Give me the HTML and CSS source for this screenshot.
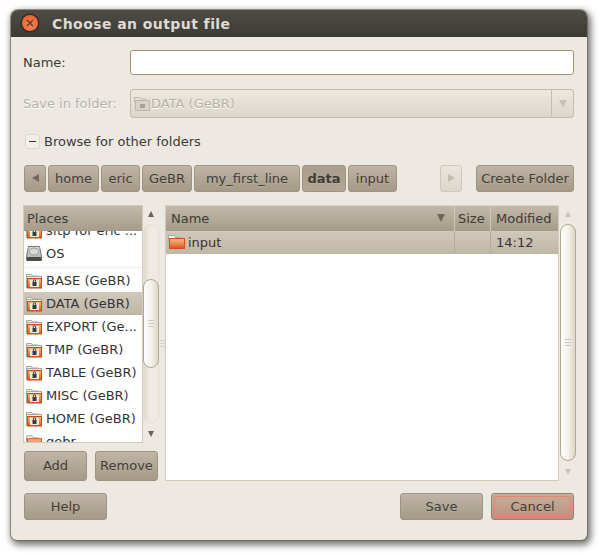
FILE: index.html
```html
<!DOCTYPE html>
<html lang="en">
<head>
<meta charset="utf-8">
<title>Choose an output file</title>
<link rel="stylesheet" href="styles.css">
</head>
<body>
<svg class="defs" width="0" height="0" aria-hidden="true">
  <defs>
    <linearGradient id="orange" x1="0" y1="0" x2="0" y2="1"><stop offset="0" stop-color="#f7b98a"/><stop offset=".5" stop-color="#ef8a4e"/><stop offset="1" stop-color="#d9501c"/></linearGradient>
    <linearGradient id="disk" x1="0" y1="0" x2="0" y2="1"><stop offset="0" stop-color="#e4e4e0"/><stop offset="1" stop-color="#a9a9a4"/></linearGradient>
    <symbol id="folder" viewBox="0 0 17 16">
      <path d="M.5 1.500h6l1 2h5v4H.5z" fill="#f4f3ef" stroke="#a9a49a"/>
      <rect x="1.500" y="4.500" width="15" height="10" fill="url(#orange)" stroke="#d0521f"/>
    </symbol>
    <symbol id="mount" viewBox="0 0 16 16">
      <path d="M.5 1.500h5l1 1.500h5.500v3H.5z" fill="#f1f0ec" stroke="#aaa59b"/>
      <rect x=".5" y="3.500" width="15" height="11" fill="#f1ebe3" stroke="#aaa59b"/>
      <rect x="1.500" y="5.500" width="14" height="9.500" fill="url(#orange)" stroke="#cf4a1a"/>
      <rect x="4" y="7" width="9" height="7" fill="#efe9df"/>
      <rect x="6.500" y="9" width="4" height="4" fill="#3c3a36"/>
      <path d="M7.300 9V8a1.200 1.200 0 0 1 2.400 0v1" fill="none" stroke="#3c3a36"/>
    </symbol>
    <symbol id="mount-off" viewBox="0 0 16 16">
      <path d="M.5 1.500h5l1 1.500h5.500v3H.5z" fill="#e6e2da" stroke="#bdb8ac"/>
      <rect x="1.500" y="4.500" width="14" height="10" fill="#d8d3c9" stroke="#bdb8ac"/>
      <rect x="6" y="8" width="5" height="4" fill="#a6a196"/>
    </symbol>
    <symbol id="drive" viewBox="0 0 16 16">
      <path d="M2.500 .5h11l2 10v4H.5v-4z" fill="url(#disk)" stroke="#77756f"/>
      <ellipse cx="8" cy="5.500" rx="5" ry="3.500" fill="#d8d8d4" stroke="#9a9a95"/>
      <rect x="1" y="11" width="14" height="4" fill="#4b4a46"/>
    </symbol>
  </defs>
</svg>

<main class="window">
  <header class="titlebar">
    <span class="close"><svg width="8" height="8" viewBox="0 0 8 8"><path d="M1 1l6 6M7 1l-6 6" stroke="#6b3a22" stroke-width="1.600"/></svg></span>
    <h1 class="title">Choose an output file</h1>
  </header>

  <div class="content">
    <div class="form-row name-row">
      <label class="field-label">Name:</label>
      <div class="entry"></div>
    </div>
    <div class="form-row folder-row">
      <label class="field-label disabled-text">Save in folder:</label>
      <div class="combo">
        <span class="combo-value disabled-text"><svg class="icon"><use href="#mount-off"/></svg>DATA (GeBR)</span>
        <span class="combo-arrow"><i class="tri tri-down-off"></i></span>
      </div>
    </div>

    <div class="expander">
      <span class="expander-box"></span>
      <span>Browse for other folders</span>
    </div>

    <div class="pathbar">
      <button class="btn nav-btn"><i class="tri tri-left"></i></button>
      <button class="btn crumb crumb-home">home</button>
      <button class="btn crumb crumb-eric">eric</button>
      <button class="btn crumb crumb-gebr">GeBR</button>
      <button class="btn crumb crumb-line">my_first_line</button>
      <button class="btn crumb crumb-data">data</button>
      <button class="btn crumb crumb-input">input</button>
      <button class="btn nav-btn nav-off"><i class="tri tri-right"></i></button>
      <button class="btn create">Create Folder</button>
    </div>

    <div class="browser">
      <section class="places-pane">
        <div class="places-box">
          <div class="tree">
            <div class="col-head places-head">Places</div>
            <div class="places-view">
              <ul class="places-list">
                <li class="place"><svg class="icon"><use href="#mount"/></svg><span>sftp for eric ...</span></li>
                <li class="place"><svg class="icon"><use href="#drive"/></svg><span>OS</span></li>
                <li class="place-sep"></li>
                <li class="place"><svg class="icon"><use href="#mount"/></svg><span>BASE (GeBR)</span></li>
                <li class="place selected"><svg class="icon"><use href="#mount"/></svg><span>DATA (GeBR)</span></li>
                <li class="place"><svg class="icon"><use href="#mount"/></svg><span>EXPORT (Ge...</span></li>
                <li class="place"><svg class="icon"><use href="#mount"/></svg><span>TMP (GeBR)</span></li>
                <li class="place"><svg class="icon"><use href="#mount"/></svg><span>TABLE (GeBR)</span></li>
                <li class="place"><svg class="icon"><use href="#mount"/></svg><span>MISC (GeBR)</span></li>
                <li class="place"><svg class="icon"><use href="#mount"/></svg><span>HOME (GeBR)</span></li>
                <li class="place"><svg class="icon"><use href="#folder"/></svg><span>gebr</span></li>
              </ul>
            </div>
          </div>
          <div class="scrollbar places-scroll">
            <i class="tri tri-up"></i>
            <div class="trough"><div class="thumb places-thumb"><b class="grip"></b></div></div>
            <i class="tri tri-down"></i>
          </div>
        </div>
        <div class="places-actions">
          <button class="btn small">Add</button>
          <button class="btn small">Remove</button>
        </div>
      </section>

      <div class="pane-grip"><b></b></div>

      <section class="files-pane">
        <div class="files-tree">
          <div class="files-head">
            <div class="col-head col-name">Name<i class="tri tri-sort"></i></div>
            <div class="col-head col-size">Size</div>
            <div class="col-head col-mod">Modified</div>
          </div>
          <div class="file-row">
            <div class="cell col-name"><svg class="icon icon-wide"><use href="#folder"/></svg><span>input</span></div>
            <div class="cell col-size"></div>
            <div class="cell col-mod">14:12</div>
          </div>
        </div>
        <div class="scrollbar files-scroll">
          <i class="tri tri-up-off"></i>
          <div class="trough"><div class="thumb files-thumb"><b class="grip"></b></div></div>
          <i class="tri tri-down-off"></i>
        </div>
      </section>
    </div>

    <footer class="actions">
      <button class="btn action help">Help</button>
      <button class="btn action">Save</button>
      <button class="btn action cancel"><span class="focus">Cancel</span></button>
    </footer>
  </div>
</main>
</body>
</html>
```

FILE: styles.css
```css
* { box-sizing: border-box; }
html, body { margin: 0; padding: 0; background: #fff; }
body {
  width: 605px;
  height: 556px;
  padding: 10px 0 0 11px;
  overflow: hidden;
  font-family: "DejaVu Sans", sans-serif;
  font-size: 13px;
  color: #3c3b37;
}
.defs { position: absolute; }
ul { list-style: none; margin: 0; padding: 0; }

.window {
  width: 576px;
  height: 530px;
  border-radius: 7px 7px 6px 6px;
  background: #ede9e2;
  box-shadow: 0 0 0 1px rgba(105, 94, 72, .6), 2px 3px 7px 2px rgba(0, 0, 0, .55);
  overflow: hidden;
}
.titlebar {
  height: 27px;
  display: flex;
  align-items: center;
  padding-left: 11px;
  background: linear-gradient(#4f4c45, #3c3b36);
}
.close {
  width: 16px;
  height: 16px;
  margin-top: -1px;
  border-radius: 50%;
  background: radial-gradient(circle at 50% 60%, #fb8a58, #e7612f 75%);
  box-shadow: 0 0 0 1.5px #2d2b27;
  display: flex;
  align-items: center;
  justify-content: center;
}
.title {
  margin: 0 0 0 14px;
  font-size: 14px;
  font-weight: bold;
  letter-spacing: .43px;
  color: #dfdbd2;
}
.content { padding: 13px 13px 0 12px; }

.form-row { display: flex; align-items: center; }
.field-label { width: 107px; flex: none; }
.disabled-text { color: #b5b0a4; text-shadow: 0 1px 0 #fff; }
.name-row { height: 25px; }
.entry {
  flex: 1;
  height: 25px;
  border: 1px solid #a3946f;
  border-radius: 3px;
  background: #fff;
}
.folder-row { height: 29px; margin-top: 14px; }
.combo {
  flex: 1;
  height: 29px;
  border: 1px solid #c5bdac;
  border-radius: 3px;
  display: flex;
  background: linear-gradient(#ede9e1, #dcd6ca);
}
.combo-value { flex: 1; display: flex; align-items: center; gap: 1px; padding-left: 3px; }
.combo-arrow {
  width: 22px;
  border-left: 1px solid #c5bdac;
  display: flex;
  align-items: center;
  justify-content: center;
}
.icon { width: 16px; height: 16px; flex: none; }
.icon-wide { width: 17px; }

.expander {
  height: 16px;
  margin-top: 15px;
  padding-left: 2px;
  display: flex;
  align-items: center;
  gap: 4px;
}
.expander-box {
  width: 15px;
  height: 15px;
  border: 1px solid #dcd7cb;
  border-radius: 3px;
  background: linear-gradient(90deg, #3c3b37, #3c3b37) center / 7px 1px no-repeat, #f2efe9;
}

.btn {
  margin: 0;
  padding: 0 0 1px;
  font: inherit;
  color: #3f3d38;
  border: 1px solid #9d9484;
  border-radius: 3px;
  background: linear-gradient(#c0b5a5, #a49a87);
  text-shadow: 0 1px 0 rgba(255, 255, 255, .12);
  display: flex;
  align-items: center;
  justify-content: center;
  flex: none;
}
.pathbar { display: flex; margin-top: 16px; height: 27px; gap: 2px; padding-left: 1px; }
.pathbar .btn { height: 27px; }
.nav-btn { width: 22px; }
.nav-off { margin-left: 41px; border-color: #cfc8ba; background: linear-gradient(#eae5dc, #ddd7cb); }
.crumb-home { width: 51px; }
.crumb-eric { width: 39px; }
.crumb-gebr { width: 50px; }
.crumb-line { width: 106px; }
.crumb-data { width: 44px; font-weight: bold; background: linear-gradient(#a89e8b, #b0a693); }
.crumb-input { width: 49px; }
.create { width: 98px; margin-left: 12px; }

.tri { display: block; width: 0; height: 0; flex: none; border-style: solid; border-color: transparent; }
.tri-left { border-width: 4px 7px 4px 0; border-right-color: #6f6a5e; }
.tri-right { border-width: 4px 0 4px 7px; border-left-color: #c4bdae; }
.tri-up { border-width: 0 3.5px 6px; border-bottom-color: #67635a; }
.tri-down { border-width: 6px 3.5px 0; border-top-color: #67635a; }
.tri-up-off { border-width: 0 3.5px 6px; border-bottom-color: #c9c3b5; }
.tri-down-off { border-width: 6px 3.5px 0; border-top-color: #c9c3b5; }
.combo-arrow .tri-down-off { border-width: 8px 4.5px 0; }
.tri-sort { border-width: 8px 4.5px 0; border-top-color: #6d685d; margin-left: auto; }

.browser { display: flex; margin-top: 13px; height: 276px; }
.places-pane { width: 136px; flex: none; }
.places-box { display: flex; height: 238px; }
.tree {
  width: 120px;
  flex: none;
  border: 1px solid #d3cbb9;
  background: #fff;
  display: flex;
  flex-direction: column;
  overflow: hidden;
}
.col-head {
  height: 25px;
  display: flex;
  align-items: center;
  padding: 0 3px 1px;
  flex: none;
  background: linear-gradient(#c2b9a9, #a59b88);
  border-right: 1px solid #d0c9ba;
}
.places-head { border-right: 0; }
.places-view { flex: 1; overflow: hidden; }
.places-list { margin-top: -12px; }
.place {
  height: 23px;
  display: flex;
  align-items: center;
  gap: 4px;
  padding-left: 2px;
  white-space: nowrap;
  color: #33343a;
}
.place-sep {
  height: 4px;
  background: linear-gradient(#f1ede6, #f1ede6) center / 100% 1px no-repeat;
}
.selected { background: linear-gradient(#d0c8ba, #bfb6a6); }

.scrollbar {
  width: 16px;
  flex: none;
  display: flex;
  flex-direction: column;
  align-items: center;
  padding: 6px 0;
}
.trough {
  width: 16px;
  flex: 1;
  margin: 7px 0 8px;
  position: relative;
  background: linear-gradient(90deg, #dfd9cd, #efebe4 40%, #efebe4);
  border-radius: 8px;
  border: 1px solid #e4dfd4;
}
.thumb {
  position: absolute;
  left: -1px;
  width: 16px;
  border: 1px solid #b3a88f;
  border-radius: 8px;
  background: linear-gradient(90deg, #fff, #f5f2ec 50%, #ddd6c8);
  display: flex;
  align-items: center;
  justify-content: center;
}
.places-thumb { top: 54px; height: 89px; }
.files-thumb { top: -1px; height: 237px; }
.grip { display: block; width: 6px; height: 7px; background: repeating-linear-gradient(#cfc8b9 0 1px, transparent 1px 3px); }
.places-actions { display: flex; justify-content: space-between; margin-top: 8px; padding: 0 1px; }
.small { width: 63px; height: 30px; }

.pane-grip { width: 6px; flex: none; display: flex; align-items: center; justify-content: center; }
.pane-grip b { display: block; width: 5px; height: 7px; background: repeating-linear-gradient(#d6cfc1 0 1px, transparent 1px 3px); }

.files-pane { flex: 1; display: flex; gap: 1px; }
.files-tree { width: 394px; flex: none; border: 1px solid #d3cbb9; border-top-color: #d8d1c2; background: #fff; }
.files-head, .file-row { display: flex; }
.col-name { width: 289px; }
.col-size { width: 36px; }
.col-mod { width: 67px; border-right: 0; }
.file-row { height: 23px; background: linear-gradient(#d0c8ba, #bfb6a6); }
.cell { display: flex; align-items: center; padding: 0 0 1px 2px; gap: 3px; border-right: 1px solid #b4aa98; color: #33343a; }
.cell.col-mod { border-right: 0; padding-left: 5px; }
.col-head.col-name { padding-left: 5px; padding-right: 9px; }
.col-head.col-mod { padding-left: 5px; }

.actions { display: flex; gap: 8px; margin-top: 12px; padding-left: 1px; }
.action { width: 83px; height: 27px; }
.help { margin-right: 285px; }
.cancel { padding: 2px; background: linear-gradient(#c7ae9b, #b8927c); border-color: #8e8471; }
.focus {
  width: 100%;
  height: 100%;
  display: flex;
  align-items: center;
  justify-content: center;
  border: 1px solid #e9836b;
  border-radius: 2px;
}
```
